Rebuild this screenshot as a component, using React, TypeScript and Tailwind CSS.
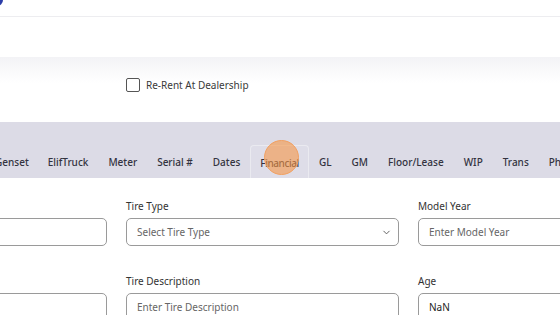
import React from "react";

const tabs = ["Genset", "ElifTruck", "Meter", "Serial #", "Dates", "Financial", "GL", "GM", "Floor/Lease", "WIP", "Trans", "Photos"];

export default function App() {
  return (
    <div className="w-[560px] h-[315px] overflow-hidden bg-white relative" style={{ fontFamily: '"Noto Sans", "Open Sans", sans-serif' }}>
      {/* header */}
      <div className="h-[17px] bg-white border-b border-[#ededf0] shadow-[0_1px_2px_rgba(0,0,0,0.04)] flex">
        <div className="w-[12px] h-[12px] rounded-full bg-[#2c3ea8] ml-[-9px] mt-[-6px]" />
      </div>
      <div className="h-[40px] bg-white" />
      {/* gradient band */}
      <div className="h-[65px] bg-linear-to-b from-[#f3f3f6] to-white to-[40%] flex">
        <div className="ml-[126px] mt-[21px] flex items-center gap-[6px] h-[14px]">
          <div className="w-[14px] h-[14px] border border-[#555] rounded-[2px] bg-white" />
          <span className="text-[10px] text-[#3a3a3a] leading-none">Re-Rent At Dealership</span>
        </div>
      </div>
      {/* tab bar */}
      <div className="h-[56px] bg-[#dcdbe6] flex items-end">
        <div className="flex ml-[-15px] h-[33px] items-stretch">
          {tabs.map((t) => (
            <div
              key={t}
              className={
                "pt-[2px] flex items-center text-[10px] font-medium text-[#33333f] whitespace-nowrap relative " +
                (t === "Financial"
                  ? "border border-b-0 border-[#eaeaf0] rounded-t-[4px] px-[9px] bg-[#dedde8] tracking-[-0.4px]"
                  : t === "Genset"
                  ? "pl-[10px] pr-[9px]"
                  : "px-[10px]")
              }
            >
              {t}
              {t === "Financial" && (
                <div className="absolute left-1/2 ml-[-16px] top-[-6px] w-[35px] h-[35px] rounded-full bg-[rgba(245,150,70,0.6)] border border-[#f2a060]" />
              )}
            </div>
          ))}
        </div>
      </div>
      {/* form */}
      <div className="flex gap-[19px] ml-[-166px] mt-[21px]">
        {[["", ""], ["Tire Type", "Select Tire Type"], ["Model Year", "Enter Model Year"]].map(([label, ph], i) => (
          <div key={i} className="w-[273px] shrink-0 flex flex-col">
            <div className="h-[15px] text-[10px] text-[#333] leading-[15px]">{label}</div>
            <div className="mt-[4px] h-[28px] border border-[#9a9a9a] rounded-[5px] flex items-center justify-between px-[10px]">
              <span className="text-[10px] text-[#666]">{ph}</span>
              {i === 1 && (
                <svg width="11" height="11" viewBox="0 0 24 24" fill="none" stroke="#555" strokeWidth="2" strokeLinecap="round" strokeLinejoin="round" className="mr-[-4px]">
                  <path d="M6 9l6 6 6-6" />
                </svg>
              )}
            </div>
          </div>
        ))}
      </div>
      <div className="flex gap-[19px] ml-[-166px] mt-[28px]">
        {[["", ""], ["Tire Description", "Enter Tire Description"], ["Age", "NaN"]].map(([label, ph], i) => (
          <div key={i} className="w-[273px] shrink-0 flex flex-col">
            <div className="h-[15px] text-[10px] text-[#333] leading-[15px]">{label}</div>
            <div className="mt-[4px] h-[28px] border border-[#9a9a9a] rounded-[5px] flex items-center px-[10px]">
              <span className={"text-[10px] " + (i === 2 ? "text-[#222]" : "text-[#666]")}>{ph}</span>
            </div>
          </div>
        ))}
      </div>
    </div>
  );
}
